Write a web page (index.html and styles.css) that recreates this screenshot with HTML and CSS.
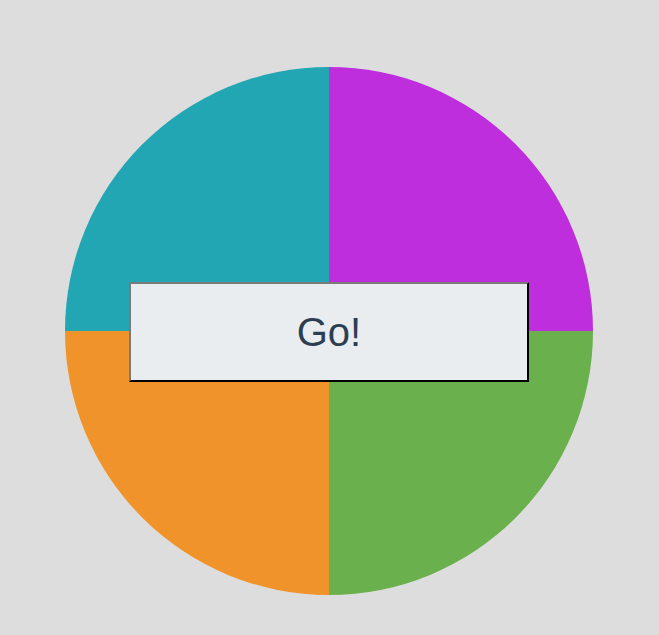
FILE: index.html
```html
<!DOCTYPE html>
<html lang="en">
<head>
    <meta charset="UTF-8">
    <meta name="viewport" content="width=device-width, initial-scale=1.0">
    <title>Wheel</title>
    <link rel="stylesheet" href="styles.css">
</head>
<body>
    <div class="stage">
        <div class="wheel">
            <div class="slice teal"></div>
            <div class="slice purple"></div>
            <div class="slice orange"></div>
            <div class="slice green"></div>
        </div>
        <button type="button" class="go">Go!</button>
    </div>
</body>
</html>
```

FILE: styles.css
```css
body {
    font-family: "Liberation Sans", Arial, sans-serif;
    background-color: #dddddd;
    margin: 0;
    padding: 67px 0 0 65px;
}

.stage {
    display: grid;
    width: 528px;
    height: 528px;
}

.wheel {
    grid-area: 1 / 1;
    display: grid;
    grid-template-columns: 1fr 1fr;
    grid-template-rows: 1fr 1fr;
    border-radius: 50%;
    overflow: hidden;
}

.teal {
    background-color: #22a6b3;
}

.purple {
    background-color: #be2edd;
}

.orange {
    background-color: #f0932b;
}

.green {
    background-color: #6ab04c;
}

.go {
    grid-area: 1 / 1;
    place-self: center;
    width: 400px;
    height: 100px;
    margin-top: 2px;
    background-color: #e9edf0;
    color: #2c3e50;
    font-family: "Liberation Sans", Arial, sans-serif;
    font-size: 40px;
    border: 2px outset #767676;
    border-color: #7a7a7a #222222 #222222 #7a7a7a;
    padding: 0;
    cursor: pointer;
}
```
